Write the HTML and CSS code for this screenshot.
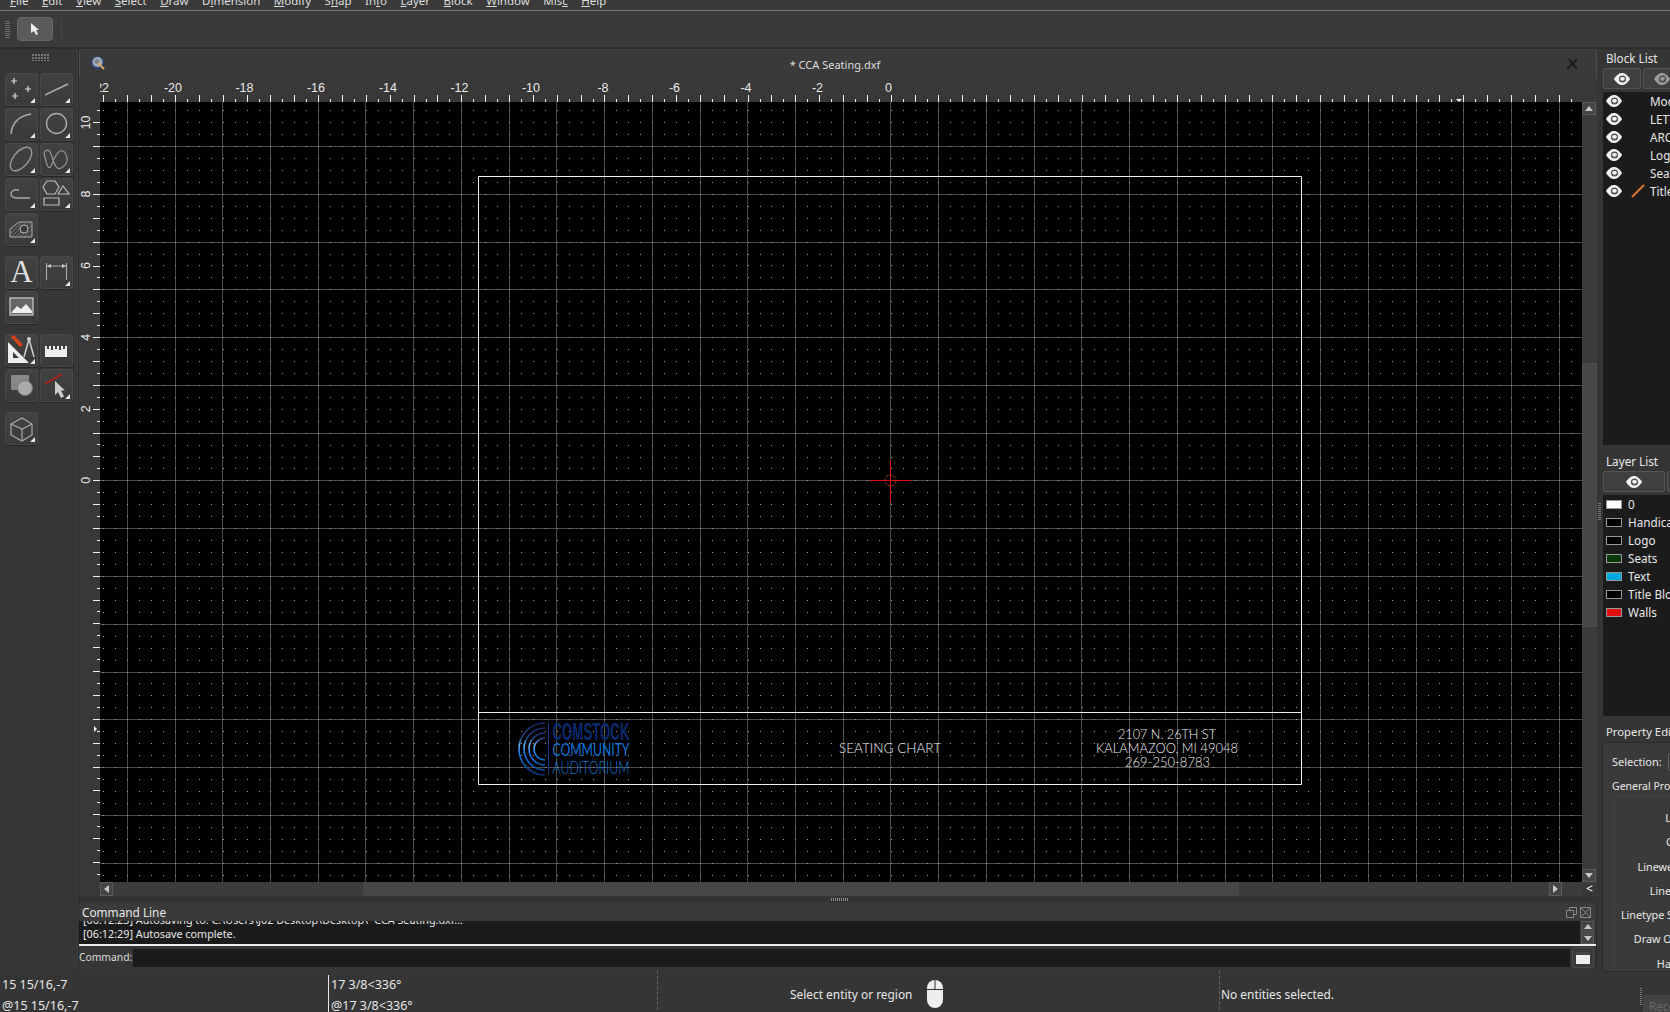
FILE: index.html
```html
<!DOCTYPE html>
<html lang="en">
<head>
<meta charset="utf-8">
<title>CCA Seating.dxf</title>
<link rel="stylesheet" href="styles.css">
</head>
<body>
<div class="app">
  <nav class="menubar">
    <span><u>F</u>ile</span><span><u>E</u>dit</span><span><u>V</u>iew</span><span><u>S</u>elect</span><span><u>D</u>raw</span><span>D<u>i</u>mension</span><span><u>M</u>odify</span><span>S<u>n</u>ap</span><span>In<u>f</u>o</span><span><u>L</u>ayer</span><span><u>B</u>lock</span><span><u>W</u>indow</span><span>Mis<u>c</u></span><span><u>H</u>elp</span>
  </nav>
  <div class="toolbar">
    <i class="grip-v"></i>
    <button class="arrow-btn"><svg width="12" height="14" viewBox="0 0 12 14"><path d="M2 1v10l3-2 2 4 2-1-2-4h3z" fill="#eee"/></svg></button>
    <i class="tb-sep"></i>
  </div>
  <div class="body">
    <div class="workspace">
      <div class="work-main">
        <aside class="toolbox">
          <div class="toolbox-grip"></div>
          <div class="tool-group">
            <button class="tool more"><svg viewBox="0 0 33 33"><path d="M9 5v6M6 8h6M23 13v6M20 16h6M10 20v6M7 23h6" stroke="#ddd" stroke-width="1.2" fill="none"/></svg></button>
            <button class="tool more"><svg viewBox="0 0 33 33"><path d="M5 22L28 11" stroke="#aaa" stroke-width="1.5" fill="none"/></svg></button>
            <button class="tool more"><svg viewBox="0 0 33 33"><path d="M6 26C7 15 14 8 26 6" stroke="#aaa" stroke-width="1.6" fill="none"/></svg></button>
            <button class="tool more"><svg viewBox="0 0 33 33"><circle cx="16.5" cy="15.5" r="10" stroke="#aaa" stroke-width="1.4" fill="none"/></svg></button>
            <button class="tool more"><svg viewBox="0 0 33 33"><ellipse cx="16" cy="16" rx="14" ry="7.5" transform="rotate(-50 16 16)" stroke="#999" stroke-width="1.4" fill="none"/></svg></button>
            <button class="tool more"><svg viewBox="0 0 33 33"><path d="M5 8c5-3 6 3 8 9 2 7 5 10 8 8 4-2 7-6 6-10-1-6-4-8-7-7-4 2-7 10-9 15-2 4-4 0-5-5C5 14 3 10 5 8z" stroke="#999" stroke-width="1.2" fill="none"/></svg></button>
            <button class="tool more"><svg viewBox="0 0 33 33"><path d="M14 12c-5-1-8 1-8 4s3 4 7 4h12" stroke="#aaa" stroke-width="1.4" fill="none"/></svg></button>
            <button class="tool more"><svg viewBox="0 0 33 33"><path d="M3 9l4-6h8l4 6-4 7H7zM18 16l5-8 6 8zM4 20h15v7H4z" stroke="#bbb" stroke-width="1.2" fill="none"/></svg></button>
            <button class="tool more"><svg viewBox="0 0 33 33"><defs><pattern id="hatch" width="3" height="3" patternUnits="userSpaceOnUse" patternTransform="rotate(-45)"><path d="M0 0H3" stroke="#999" stroke-width="1"/></pattern></defs><path d="M5 16L14 9H27V24H5z" fill="url(#hatch)" stroke="#aaa"/><circle cx="19" cy="16" r="4" fill="#3a3a3a" stroke="#bbb"/></svg></button>
          </div>
          <div class="tool-group">
            <button class="tool"><svg viewBox="0 0 33 33"><text x="16.5" y="26" class="glyph-a">A</text></svg></button>
            <button class="tool more"><svg viewBox="0 0 33 33"><path d="M6.5 7v17M26.5 7v17M6 10h21" stroke="#aaa" stroke-width="1.1" fill="none"/><path d="M7 10l4-2v4zM26 10l-4-2v4z" fill="#ccc"/></svg></button>
            <button class="tool"><svg viewBox="0 0 33 33"><rect x="5" y="7" width="23" height="17" fill="#666" stroke="#ccc" stroke-width="1.2"/><path d="M6 22l6-7 4 3 5-5 6 7v2H6z" fill="#eee"/></svg></button>
          </div>
          <div class="tool-group">
            <button class="tool more"><svg viewBox="0 0 33 33"><path d="M3 29V8l21 21z" fill="#eee"/><path d="M8 24v-6l6 6z" fill="#3a3a3a"/><path d="M6 3l9 10 3-2-9-10z" fill="#d8401c"/><path d="M24 5l-5 18M24 5l5 18" stroke="#ccc" stroke-width="1.5" fill="none"/><circle cx="24" cy="5" r="2" fill="#ccc"/></svg></button>
            <button class="tool"><svg viewBox="0 0 33 33"><path d="M5 12h2v3h2v-3h2v4h2v-4h2v3h2v-3h2v4h2v-4h2v3h2v-3h2v11H5z" fill="#eee"/></svg></button>
            <button class="tool"><svg viewBox="0 0 33 33"><rect x="6" y="6" width="18" height="15" rx="1" fill="#888"/><circle cx="20" cy="19" r="7.5" fill="#aaa"/><circle cx="20" cy="19" r="7.5" fill="none" stroke="#777"/></svg></button>
            <button class="tool more"><svg viewBox="0 0 33 33"><path d="M5 15L22 5" stroke="#b02018" stroke-width="1.5"/><path d="M15 12v14l3-3 3 6 3-1.5-3-6h4z" fill="#ccc"/></svg></button>
          </div>
          <div class="tool-group">
            <button class="tool more"><svg viewBox="0 0 33 33"><path d="M6 12l11-6 10 6v11l-10 6-11-6zM6 12l11 5 10-5M17 17v12" stroke="#aaa" stroke-width="1.2" fill="none"/></svg></button>
          </div>
        </aside>
        <main class="center">
          <section class="doc">
            <header class="doc-title">
              <svg class="doc-icon" width="14" height="14" viewBox="0 0 14 14"><circle cx="6.5" cy="6.5" r="6.2" fill="#2a4684"/><circle cx="6.5" cy="6" r="5" fill="#a4abb3"/><circle cx="6" cy="5.5" r="2.5" fill="#7c848e"/><path d="M7 7l6 6" stroke="#e0a860" stroke-width="2"/></svg>
              <span class="doc-name">* CCA Seating.dxf</span>
              <svg class="doc-close" width="12" height="12" viewBox="0 0 12 12"><path d="M1 11L11 1M3 1l8 10" stroke="#151515" stroke-width="1.6"/></svg>
            </header>
            <div class="view">
              <div class="corner"></div>
              <svg class="ruler-top" width="1482" height="23" viewBox="0 0 1482 23">
                <g class="ruler-labels">
                  <text x="0" y="9">-22</text><text x="73" y="9">-20</text><text x="144.5" y="9">-18</text><text x="216" y="9">-16</text><text x="288" y="9">-14</text><text x="359.5" y="9">-12</text><text x="431" y="9">-10</text><text x="503" y="9">-8</text><text x="574.5" y="9">-6</text><text x="646" y="9">-4</text><text x="717.5" y="9">-2</text><text x="788.5" y="9">0</text>
                </g>
                <path class="tick-short" d="M3 21.5H1482"/>
                <path class="tick-long" d="M3 19.5H1482"/>
                <path class="mouse-mark" d="M1356 20l3 3 3-3z"/>
              </svg>
              <div class="vscroll-head"></div>
              <svg class="ruler-left" width="21" height="780" viewBox="0 0 21 780">
                <g class="ruler-labels">
                  <text transform="translate(7 20.5) rotate(-90)">10</text>
                  <text transform="translate(7 92) rotate(-90)">8</text>
                  <text transform="translate(7 163.5) rotate(-90)">6</text>
                  <text transform="translate(7 235.2) rotate(-90)">4</text>
                  <text transform="translate(7 306.8) rotate(-90)">2</text>
                  <text transform="translate(7 378.3) rotate(-90)">0</text>
                </g>
                <path class="tick-short" d="M19.5 8V780"/>
                <path class="tick-long" d="M17.5 20V780"/>
                <path class="mouse-mark" d="M15 624l3 3-3 3z"/>
              </svg>
              <svg class="canvas" width="1482" height="780" viewBox="0 0 1482 780">
                <rect width="1482" height="780" fill="#000"/>
                <path class="grid" d="M27.5 0V780M75.5 0V780M122.5 0V780M170.5 0V780M218.5 0V780M265.5 0V780M313.5 0V780M361.5 0V780M409.5 0V780M456.5 0V780M504.5 0V780M552.5 0V780M600.5 0V780M647.5 0V780M695.5 0V780M743.5 0V780M790.5 0V780M838.5 0V780M886.5 0V780M934.5 0V780M981.5 0V780M1029.5 0V780M1077.5 0V780M1125.5 0V780M1172.5 0V780M1220.5 0V780M1268.5 0V780M1316.5 0V780M1363.5 0V780M1411.5 0V780M1459.5 0V780M0 44.5H1482M0 92.5H1482M0 140.5H1482M0 187.5H1482M0 235.5H1482M0 283.5H1482M0 331.5H1482M0 378.5H1482M0 426.5H1482M0 474.5H1482M0 522.5H1482M0 570.5H1482M0 617.5H1482M0 665.5H1482M0 713.5H1482M0 761.5H1482"/>
                <path class="grid-dots" d="M3 8.5H1482M3 20.5H1482M3 32.5H1482M3 44.5H1482M3 56.5H1482M3 68.5H1482M3 80.5H1482M3 92.5H1482M3 104.5H1482M3 116.5H1482M3 128.5H1482M3 140.5H1482M3 152.5H1482M3 163.5H1482M3 175.5H1482M3 187.5H1482M3 199.5H1482M3 211.5H1482M3 223.5H1482M3 235.5H1482M3 247.5H1482M3 259.5H1482M3 271.5H1482M3 283.5H1482M3 295.5H1482M3 307.5H1482M3 319.5H1482M3 331.5H1482M3 343.5H1482M3 355.5H1482M3 366.5H1482M3 378.5H1482M3 390.5H1482M3 402.5H1482M3 414.5H1482M3 426.5H1482M3 438.5H1482M3 450.5H1482M3 462.5H1482M3 474.5H1482M3 486.5H1482M3 498.5H1482M3 510.5H1482M3 522.5H1482M3 534.5H1482M3 546.5H1482M3 558.5H1482M3 570.5H1482M3 581.5H1482M3 593.5H1482M3 605.5H1482M3 617.5H1482M3 629.5H1482M3 641.5H1482M3 653.5H1482M3 665.5H1482M3 677.5H1482M3 689.5H1482M3 701.5H1482M3 713.5H1482M3 725.5H1482M3 737.5H1482M3 749.5H1482M3 761.5H1482M3 773.5H1482"/>
                <path class="sheet" d="M378.5 74.5H1201.5V682.5H378.5ZM378.5 610.5H1201.5"/>
                <defs>
                  <linearGradient id="arcs" gradientUnits="userSpaceOnUse" x1="0" y1="621" x2="0" y2="673">
                    <stop offset="0" stop-color="#1a2a66"/><stop offset=".3" stop-color="#23417f"/><stop offset=".42" stop-color="#6cb0ec"/><stop offset=".6" stop-color="#0d74dc"/><stop offset=".8" stop-color="#0b5bb0"/><stop offset="1" stop-color="#0a2f70"/>
                  </linearGradient>
                </defs>
                <g class="logo-arcs">
                  <path d="M445 621A26 26 0 0 0 445 673"/><path d="M445 626A21 21 0 0 0 445 668"/><path d="M445 631A16 16 0 0 0 445 663"/><path d="M445 636A11 11 0 0 0 445 658"/>
                </g>
                <path class="logo-bar" d="M448.5 621V672"/>
                <text class="logo-1" x="452.5" y="638" textLength="77" lengthAdjust="spacingAndGlyphs">COMSTOCK</text>
                <text class="logo-2" x="452.5" y="654" textLength="77" lengthAdjust="spacingAndGlyphs">COMMUNITY</text>
                <text class="logo-3" x="452.5" y="672" textLength="77" lengthAdjust="spacingAndGlyphs">AUDITORIUM</text>
                <text class="sheet-text" x="739" y="650.5" textLength="102" lengthAdjust="spacingAndGlyphs">SEATING CHART</text>
                <text class="sheet-text" x="1018" y="636.5" textLength="98" lengthAdjust="spacingAndGlyphs">2107 N. 26TH ST</text>
                <text class="sheet-text" x="996" y="650.5" textLength="142" lengthAdjust="spacingAndGlyphs">KALAMAZOO, MI 49048</text>
                <text class="sheet-text" x="1025" y="664.5" textLength="85" lengthAdjust="spacingAndGlyphs">269-250-8783</text>
                <line class="cross" x1="770" y1="378.5" x2="811" y2="378.5"/>
                <line class="cross" x1="790.5" y1="358" x2="790.5" y2="399"/>
                <circle class="cross-ring" cx="790.5" cy="378.5" r="5.5"/>
              </svg>
              <div class="vscroll">
                <button class="sb-btn"><i class="tri-up"></i></button>
                <div class="sb-track"><div class="sb-thumb-v"></div></div>
                <button class="sb-btn"><i class="tri-down"></i></button>
              </div>
              <div class="corner"></div>
              <div class="hscroll">
                <button class="sb-btn"><i class="tri-left"></i></button>
                <div class="sb-track-h"><div class="sb-thumb-h"></div></div>
                <button class="sb-btn"><i class="tri-right"></i></button>
              </div>
              <div class="collapse">&lt;</div>
            </div>
          </section>
          <div class="splitter"><i></i></div>
          <section class="cmd">
            <header class="cmd-title">
              <span>Command Line</span>
              <span class="cmd-icons">
                <svg width="11" height="11" viewBox="0 0 11 11"><path d="M.5 3.5h7v7h-7zM3.5.5h7v7h-3M3.5.5v3" stroke="#888" fill="none"/></svg>
                <svg width="11" height="11" viewBox="0 0 11 11"><path d="M.5.5h10v10H.5zM1 1l9 9M10 1l-9 9" stroke="#888" fill="none"/></svg>
              </span>
            </header>
            <div class="cmd-log">
              <div class="cmd-lines">
                <div>[06:12:23] Autosaving to: C:\Users\J02 Desktop\Desktop\~CCA Seating.dxf...</div>
                <div>[06:12:29] Autosave complete.</div>
              </div>
              <div class="cmd-scroll">
                <button class="sb-btn"><i class="tri-up"></i></button>
                <button class="sb-btn"><i class="tri-down"></i></button>
              </div>
            </div>
            <div class="cmd-input">
              <label>Command:</label>
              <div class="cmd-field"></div>
              <button class="cmd-btn"><svg width="14" height="12" viewBox="0 0 14 12"><rect width="14" height="12" fill="#eee"/><rect width="14" height="3" fill="#444"/></svg></button>
            </div>
          </section>
        </main>
      </div>
      <footer class="status">
        <div class="st-cell st-coord"><div>15 15/16,-7</div><div>@15 15/16,-7</div></div>
        <div class="st-cell st-polar"><div>17 3/8&lt;336°</div><div>@17 3/8&lt;336°</div></div>
        <div class="st-cell st-hint">
          <span>Select entity or region</span>
          <svg width="18" height="30" viewBox="0 0 18 30"><rect x="1" y="1" width="16" height="28" rx="8" fill="#eee"/><path d="M1 10.5h16M9 1v9.5" stroke="#333"/></svg>
        </div>
        <div class="st-cell st-sel">No entities selected.</div>
      </footer>
    </div>
    <div class="dock-split"><i></i></div>
    <aside class="dock">
      <div class="dock-title">Block List</div>
      <div class="eye-row">
        <button class="eye-btn eye-b"><svg class="eye" viewBox="0 0 16 12"><use href="#eye"/></svg></button>
        <button class="eye-btn eye-b dim"><svg class="eye" viewBox="0 0 16 12"><use href="#eye"/></svg></button>
      </div>
      <ul class="block-list">
        <li><svg class="eye" viewBox="0 0 16 12"><use href="#eye"/></svg><b></b>Model</li>
        <li><svg class="eye" viewBox="0 0 16 12"><use href="#eye"/></svg><b></b>LETTERS</li>
        <li><svg class="eye" viewBox="0 0 16 12"><use href="#eye"/></svg><b></b>ARCS</li>
        <li><svg class="eye" viewBox="0 0 16 12"><use href="#eye"/></svg><b></b>Logo</li>
        <li><svg class="eye" viewBox="0 0 16 12"><use href="#eye"/></svg><b></b>Seats</li>
        <li><svg class="eye" viewBox="0 0 16 12"><use href="#eye"/></svg><b><svg width="14" height="14" viewBox="0 0 14 14"><path d="M1 13L13 1" stroke="#d8762c" stroke-width="2"/></svg></b>Title</li>
      </ul>
      <div class="dock-title">Layer List</div>
      <div class="eye-row">
        <button class="eye-btn eye-l"><svg class="eye" viewBox="0 0 16 12"><use href="#eye"/></svg></button>
        <button class="eye-btn eye-l dim"></button>
      </div>
      <ul class="layer-list">
        <li><i class="sw sw-white"></i>0</li>
        <li><i class="sw"></i>Handicap</li>
        <li><i class="sw"></i>Logo</li>
        <li><i class="sw sw-green"></i>Seats</li>
        <li><i class="sw sw-blue"></i>Text</li>
        <li><i class="sw"></i>Title Block</li>
        <li><i class="sw sw-red"></i>Walls</li>
      </ul>
      <div class="dock-title prop-title">Property Editor</div>
      <div class="prop">
        <div class="prop-sel"><span>Selection:</span><i class="combo"></i></div>
        <div class="prop-group-title">General Properties</div>
        <div class="prop-group">
          <div>Layer:</div><div>Color:</div><div>Lineweight:</div><div>Linetype:</div><div>Linetype Scale:</div><div>Draw Order:</div><div>Handle:</div>
        </div>
      </div>
      <div class="prop-foot"><i></i><button>Recent</button></div>
    </aside>
  </div>
</div>
<svg class="defs" width="0" height="0"><defs><g id="eye"><path d="M0 6C3 1 6 0 8 0s5 1 8 6c-3 5-6 6-8 6S3 11 0 6z" fill="#f2f2f2"/><circle cx="8.5" cy="6" r="3.6" fill="#555"/><path d="M6 5.5c1-2 4-2 5 0-1 3-4 3-5 0z" fill="#f2f2f2"/></g></defs></svg>
</body>
</html>
```

FILE: styles.css
```css
* { box-sizing: border-box; }
html, body { margin: 0; height: 100%; overflow: hidden; background: #353535; }
body { font: 12px/1.2 "Noto Sans", "Open Sans", sans-serif; color: #e8e8e8; }
button { font: inherit; color: inherit; padding: 0; }
ul { list-style: none; margin: 0; padding: 0; }
.defs { position: absolute; }
.app { width: 1670px; height: 1012px; display: flex; flex-direction: column; overflow: hidden; }

.menubar { height: 11px; flex: none; overflow: hidden; display: flex; align-items: flex-end; gap: 13.5px; padding: 0 0 2px 10px; border-bottom: 1px solid #7a7a7a; background: #3a3a3a; color: #ddd; font-size: 11.5px; }
.toolbar { height: 38px; flex: none; display: flex; align-items: center; padding-left: 5px; background: #3a3a3a; border-bottom: 2px solid #2c2c2c; }
.grip-v { width: 5px; height: 17px; background: repeating-linear-gradient(#6a6a6a 0 1px, transparent 1px 2px); }
.arrow-btn { width: 36px; height: 24px; margin-left: 7px; border: 1px solid #666; border-radius: 4px; background: #5a5a5a; display: flex; align-items: center; justify-content: center; }
.tb-sep { width: 1px; height: 18px; margin-left: 8px; background: #484848; }

.body { flex: 1; display: flex; min-height: 0; }
.workspace { width: 1597px; flex: none; display: flex; flex-direction: column; }
.work-main { height: 922px; flex: none; display: flex; }

.toolbox { width: 79px; flex: none; padding: 0 0 0 5px; border-right: 1px solid #2a2a2a; background: #363636; box-shadow: inset -1px 0 0 #3e3e3e; }
.toolbox-grip { height: 7px; width: 17px; margin: 5px 0 12px 27px; background: repeating-linear-gradient(90deg, #777 0 2px, transparent 2px 3px); -webkit-mask: repeating-linear-gradient(#000 0 2px, transparent 2px 3px); mask: repeating-linear-gradient(#000 0 2px, transparent 2px 3px); }
.tool-group { display: grid; grid-template-columns: 33px 33px; gap: 2px; margin-bottom: 10px; }
.tool { position: relative; width: 33px; height: 33px; border: 1px solid #484848; border-radius: 3px; background: linear-gradient(#424242, #3a3a3a); box-shadow: 0 1px 0 #262626; }
.tool svg { position: absolute; left: -1px; top: -1px; width: 33px; height: 33px; }
.tool.more::after { content: ""; position: absolute; right: 2px; bottom: 2px; border-style: solid; border-width: 0 0 5px 5px; border-color: transparent transparent #e8e8e8; }
.glyph-a { font: 400 31px "Liberation Serif", serif; fill: #e0e0e0; text-anchor: middle; }

.center { flex: 1; min-width: 0; display: flex; flex-direction: column; }
.doc { height: 847px; flex: none; background: #353535; }
.doc-title { height: 30px; display: flex; align-items: center; justify-content: center; position: relative; background: #3a3a3a; border: 1px solid #4c4c4c; border-bottom: 0; border-top-color: #414141; border-radius: 4px 4px 0 0; color: #ddd; font-size: 11px; }
.doc-name { margin-left: -6px; margin-top: 1px; }
.doc-icon { position: absolute; left: 11px; top: 6px; }
.doc-close { position: absolute; right: 18px; top: 8px; }
.view { display: grid; grid-template-columns: 21px 1482px 15px; grid-template-rows: 23px 780px 14px; background: #383838; }
.corner { background: #383838; }
.ruler-top, .ruler-left, .canvas { display: block; }
.vscroll-head { background: #383838; }
.ruler-labels text { font: 12.5px "Liberation Sans", sans-serif; fill: #e8e8e8; text-anchor: middle; dominant-baseline: central; }
.tick-short { stroke: #f2f2f2; stroke-width: 3; stroke-dasharray: 1 11 1 11 1 11 1 11 1 11 1 11 1 11 1 11 1 11 1 11 1 11 1 11 1 11 1 10; fill: none; }
.tick-long { stroke: #f2f2f2; stroke-width: 7; stroke-dasharray: 1 23 1 23 1 23 1 23 1 23 1 23 1 22; fill: none; }
.mouse-mark { fill: #f2f2f2; }
.grid { stroke: #4c4c4c; stroke-width: 1; fill: none; }
.grid-dots { stroke: #a0a0a0; stroke-width: 1; stroke-dasharray: 1 11 1 11 1 11 1 11 1 11 1 11 1 11 1 11 1 11 1 11 1 11 1 11 1 11 1 10; fill: none; }
.sheet { fill: none; stroke: #f0f0f0; stroke-width: 1; }
.logo-arcs path { fill: none; stroke: url(#arcs); stroke-width: 1.6; }
.logo-bar { stroke: #123a86; stroke-width: 1; }
.logo-1 { font: 700 23px "Liberation Sans", sans-serif; fill: #0a2a6e; }
.logo-2 { font: 400 18px "Lato", sans-serif; fill: #0f74d8; }
.logo-3 { font: 300 18px "Lato", sans-serif; fill: #1478dc; }
.sheet-text { font: 300 13px "Lato", sans-serif; fill: #ececec; }
.cross { stroke: #e01010; stroke-width: 1; fill: none; }
.cross-ring { fill: none; stroke: #a8421f; stroke-width: 1; stroke-dasharray: 3 1; }

.vscroll { display: flex; flex-direction: column; background: #3c3c3c; }
.sb-btn { width: 14px; height: 13px; flex: none; border: 1px solid #5a5a5a; background: #444; display: flex; align-items: center; justify-content: center; }
.sb-track { flex: 1; padding-top: 248px; padding-bottom: 242px; background: #3b3b3b; }
.sb-thumb-v { height: 100%; background: #474747; border: 1px solid #4d4d4d; }
.hscroll { display: flex; background: #3c3c3c; }
.hscroll .sb-btn { height: 14px; width: 13px; }
.hscroll .sb-btn:last-child { margin-right: 20px; }
.sb-track-h { flex: 1; padding-left: 250px; padding-right: 310px; }
.sb-thumb-h { height: 100%; background: #474747; }
.tri-up, .tri-down, .tri-left, .tri-right { width: 0; height: 0; border-style: solid; }
.tri-up { border-width: 0 4.5px 5px; border-color: transparent transparent #c8c8c8; }
.tri-down { border-width: 5px 4.5px 0; border-color: #c8c8c8 transparent transparent; }
.tri-left { border-width: 4.5px 5px 4.5px 0; border-color: transparent #c8c8c8 transparent transparent; }
.tri-right { border-width: 4.5px 0 4.5px 5px; border-color: transparent transparent transparent #c8c8c8; }
.collapse { font-size: 12px; line-height: 14px; text-align: center; color: #fff; }

.splitter { height: 7px; flex: none; display: flex; justify-content: center; align-items: center; background: #333; }
.splitter i { width: 17px; height: 3px; margin-left: 2px; background: repeating-linear-gradient(90deg, #888 0 1px, transparent 1px 2px); }
.cmd { flex: 1; display: flex; flex-direction: column; background: #363636; border-right: 1px solid #2a2a2a; }
.cmd-title { height: 18px; flex: none; display: flex; justify-content: space-between; align-items: center; padding: 0 5px 0 3px; background: #3a3a3a; font-size: 11.8px; }
.cmd-icons { display: flex; gap: 3px; }
.cmd-log { height: 23px; flex: none; display: flex; background: #1b1b1b; }
.cmd-lines { flex: 1; height: 23px; display: flex; flex-direction: column; justify-content: flex-end; overflow: hidden; padding: 0 0 3px 4px; font-size: 10.8px; line-height: 14px; }
.cmd-scroll { display: flex; flex-direction: column; width: 16px; flex: none; background: #363636; }
.cmd-scroll .sb-btn { height: 11px; width: 13px; margin: 0 0 1px 1px; }
.cmd-input { height: 25px; flex: none; display: flex; align-items: center; border-top: 2px solid #ececec; font-size: 10.3px; }
.cmd-input label { width: 54px; flex: none; color: #ddd; white-space: nowrap; }
.cmd-field { width: 1437px; height: 18px; background: #1b1b1b; }
.cmd-btn { width: 22px; height: 21px; margin-left: 2px; border: 1px solid #4d4d4d; border-radius: 3px; background: #3a3a3a; display: flex; align-items: center; justify-content: center; }

.status { height: 41px; flex: none; display: grid; grid-template-columns: 328px 329px 562px 1fr; background: #353535; font-size: 12.5px; }
.st-cell { position: relative; min-width: 0; white-space: nowrap; }
.st-coord, .st-polar { display: flex; flex-direction: column; gap: 3px; padding: 5px 0 0 2px; line-height: 18px; }
.st-polar { border-left: 1px solid #e8e8e8; margin-top: 4px; padding-top: 1px; }
.st-hint { display: flex; align-items: center; gap: 14px; padding-left: 132px; padding-top: 2px; font-size: 11.9px; border-left: 1px dashed #666; }
.st-sel { padding: 16px 0 0 1px; font-size: 11.9px; border-left: 1px dashed #666; }

.dock-split { width: 5px; flex: none; display: flex; align-items: flex-start; background: #353535; }
.dock-split i { display: block; width: 3px; height: 17px; margin: 454px 0 0 1px; background: repeating-linear-gradient(#777 0 1px, transparent 1px 2px); }
.dock { width: 68px; flex: none; overflow: hidden; background: #353535; display: flex; flex-direction: column; font-size: 11.7px; }
.dock-title { height: 19px; flex: none; padding: 0 0 0 4px; white-space: nowrap; line-height: 18px; }
.eye-row { display: flex; gap: 2px; height: 21px; flex: none; width: 200px; margin-left: 1px; }
.eye-btn { height: 21px; flex: none; border: 1px solid #555; border-radius: 2px; background: #404040; display: flex; align-items: center; justify-content: center; }
.eye-b { width: 38px; }
.eye-l { width: 62px; }
.eye { width: 16px; height: 12px; flex: none; }
.dim .eye { opacity: .5; }
.block-list { height: 353px; flex: none; margin: 3px 0 7px 1px; width: 200px; background: #1b1b1b; }
.block-list li { height: 18px; display: flex; align-items: center; padding-left: 3px; white-space: nowrap; }
.block-list b { display: block; width: 28px; padding-left: 9px; height: 14px; }
.layer-list { height: 221px; flex: none; margin: 3px 0 7px 1px; width: 200px; background: #1b1b1b; }
.layer-list li { height: 18px; display: flex; align-items: center; padding-left: 3px; white-space: nowrap; gap: 6px; }
.sw { width: 16px; height: 9px; flex: none; background: #000; border: 1px solid #999; }
.sw-white { background: #fff; }
.sw-green { background: #0a3a0a; }
.sw-blue { background: #00a8e0; }
.sw-red { background: #e01010; }
.prop-title { font-size: 11.3px; }
.prop { height: 230px; flex: none; width: 200px; border: 1px solid #2a2a2a; border-right: 0; background: #3a3a3a; padding: 10px 0 0 9px; overflow: hidden; font-size: 11px; }
.prop-sel { display: flex; align-items: center; gap: 6px; height: 18px; }
.combo { width: 60px; height: 18px; border: 1px solid #666; border-radius: 3px; background: #333; }
.prop-group-title { margin-top: 7px; height: 16px; line-height: 16px; font-size: 10.5px; }
.prop-group { margin: 2px 0 0 2px; border: 1px solid #444; border-radius: 3px; padding-top: 11px; text-align: right; white-space: nowrap; width: 83px; font-size: 10.8px; }
.prop-group div { height: 24.3px; line-height: 20px; }
.prop-foot { flex: 1; display: flex; gap: 1px; padding: 16px 0 0 38px; align-items: flex-start; width: 200px; }
.prop-foot i { width: 2px; height: 17px; background: repeating-linear-gradient(#777 0 1px, transparent 1px 2px); }
.prop-foot button { width: 80px; height: 22px; margin-top: 7px; border: 0; background: #444; color: #666; text-align: left; padding-left: 6px; }
```
